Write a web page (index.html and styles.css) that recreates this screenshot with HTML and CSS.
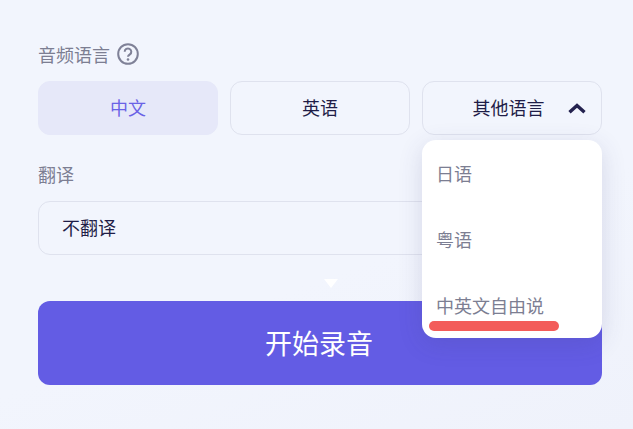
FILE: index.html
```html
<!DOCTYPE html>
<html lang="zh-CN">
<head>
    <meta charset="UTF-8">
    <meta name="viewport" content="width=device-width, initial-scale=1.0">
    <title>开始录音</title>
    <link rel="stylesheet" href="styles.css">
</head>
<body>

    <div class="panel">

        <div class="field-label audio-label">
            <span>音频语言</span>
            <svg class="help-icon" viewBox="0 0 22 22" width="22" height="22">
                <circle cx="11" cy="11" r="9.8" fill="none" stroke="#7f8197" stroke-width="2"/>
                <path d="M7.7 8.700a3.300 3.200 0 1 1 5.200 2.600c-1.200.8-1.900 1.300-1.900 2.500" fill="none" stroke="#7f8197" stroke-width="2"/>
                <circle cx="11" cy="16.500" r="1.300" fill="#7f8197"/>
            </svg>
        </div>

        <div class="lang-row">
            <div class="option active">中文</div>
            <div class="option">英语</div>
            <div class="option-wrap">
                <div class="option other">
                    <span>其他语言</span>
                    <svg class="chevron" viewBox="0 0 18 11" width="18" height="11">
                        <path d="M1.500 9.300 9 2.500l7.500 6.800" fill="none" stroke="#24224f" stroke-width="3.400"/>
                    </svg>
                </div>
                <div class="menu">
                    <div class="menu-item">日语</div>
                    <div class="menu-item">粤语</div>
                    <div class="menu-item">中英文自由说</div>
                    <div class="menu-mark"></div>
                </div>
            </div>
        </div>

        <div class="field-label translate-label">翻译</div>
        <div class="option select">不翻译</div>

        <div class="pointer"></div>
        <button class="record-btn">开始录音</button>

    </div>

</body>
</html>
```

FILE: styles.css
```css
:root {
    --fonts: "Noto Sans CJK SC", "Liberation Sans", sans-serif;
    --border: #dfe2ee;
    --label: #7c7e92;
    --dark: #1f1d47;
    --purple: #635ce4;
}
html, body {
    height: 100%;
}
body {
    margin: 0;
    overflow: hidden;
    background: linear-gradient(160deg, #f2f5fd, #f2f5fd 60%, #eff2fb);
    font-family: var(--fonts);
    font-size: 18px;
    color: var(--dark);
}
.panel {
    padding: 40px 31px 0 38px;
    display: flex;
    flex-direction: column;
}
.field-label {
    color: var(--label);
    line-height: 28px;
}
.audio-label {
    display: flex;
    align-items: center;
    gap: 7px;
    margin-bottom: 13px;
}
.translate-label {
    margin-top: 25px;
    margin-bottom: 13px;
}
.lang-row {
    display: grid;
    grid-template-columns: repeat(3, 180px);
    gap: 12px;
}
.option {
    box-sizing: border-box;
    height: 54px;
    flex: none;
    padding-bottom: 2px;
    border: 1px solid var(--border);
    border-radius: 12px;
    display: flex;
    align-items: center;
    justify-content: center;
}
.option.active {
    background-color: #e6e8f9;
    border-color: #e6e8f9;
    color: #6a62e6;
}
.option-wrap {
    position: relative;
}
.other {
    gap: 23px;
    padding-left: 34px;
}
.chevron {
    flex: none;
    margin-top: 2px;
}
.menu {
    position: absolute;
    top: 59px;
    left: 0;
    right: 0;
    height: 198px;
    background-color: white;
    border-radius: 14px;
    box-shadow: 0 6px 24px rgba(60, 64, 120, 0.16);
    color: var(--label);
    z-index: 10;
}
.menu-item {
    height: 66px;
    line-height: 66px;
    padding-left: 14px;
}
.menu-mark {
    position: absolute;
    left: 7px;
    top: 181px;
    width: 130px;
    height: 10px;
    border-radius: 5px;
    background-color: #f35c5a;
}
.select {
    justify-content: flex-start;
    padding-left: 23px;
}
.pointer {
    align-self: flex-start;
    margin: 24px 0 13px 286px;
    border-left: 7px solid transparent;
    border-right: 7px solid transparent;
    border-top: 9px solid white;
    width: 0;
    height: 0;
}
.record-btn {
    height: 84px;
    border: none;
    border-radius: 12px;
    background-color: var(--purple);
    color: white;
    font-family: var(--fonts);
    font-size: 27px;
    padding: 0 2px 2px 0;
}
```
